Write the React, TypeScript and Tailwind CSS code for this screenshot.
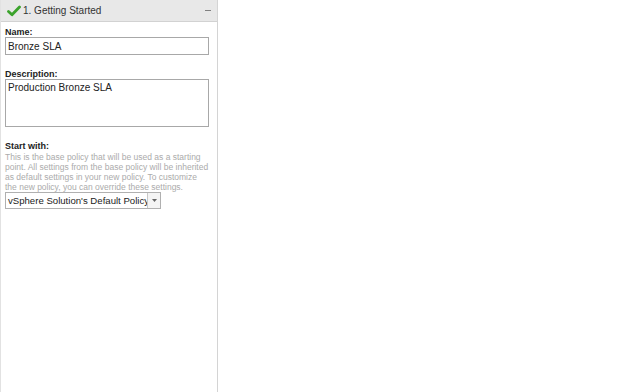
import React from 'react'

const App = () => {
  return (
    <div className="w-[640px] h-[392px] bg-white flex" style={{ fontFamily: '"Liberation Sans", Arial, sans-serif' }}>
      <div className="w-[218px] h-full border-l border-r border-l-[#e2e2e2] border-r-[#d4d4d4] flex flex-col">
        <div className="h-[22px] bg-[#e8e8e8] border-b border-[#d2d2d2] flex items-center pl-[6px] pr-[6px]">
          <svg width="14" height="12" viewBox="0 0 14 12" className="mr-[2px]">
            <path d="M1.5 6.5 L5 9.8 L12.5 2" fill="none" stroke="#3ba32c" strokeWidth="2.8" strokeLinecap="round" strokeLinejoin="round" />
          </svg>
          <span className="text-[10px] text-[#333]">1. Getting Started</span>
          <span className="ml-auto w-[6px] h-[1px] bg-[#808080]" />
        </div>
        <div className="pl-[4px] pt-[5px] flex flex-col">
          <label className="text-[9px] font-bold text-[#222] leading-[10px]">Name:</label>
          <input
            defaultValue="Bronze SLA"
            className="w-[204px] h-[18px] border border-[#a8a8a8] px-[2px] text-[10px] text-[#222] outline-none"
          />
          <label className="mt-[14px] text-[9px] font-bold text-[#222] leading-[10px]">Description:</label>
          <textarea
            defaultValue="Production Bronze SLA"
            className="w-[204px] h-[48px] border border-[#a8a8a8] px-[2px] pt-[2px] text-[10px] leading-[12px] text-[#222] outline-none resize-none"
          />
          <label className="mt-[14px] text-[9px] font-bold text-[#222] leading-[10px]">Start with:</label>
          <p className="mt-[1px] text-[8.5px] leading-[10px] text-[#ababab] w-[206px]">
            This is the base policy that will be used as a starting point. All settings from the base policy will be inherited as default settings in your new policy. To customize the new policy, you can override these settings.
          </p>
          <div className="flex w-[156px] h-[17px] border border-[#b0b0b0]">
            <div className="flex-1 overflow-hidden whitespace-nowrap text-[9.6px] leading-[15px] pl-[2px] text-[#222]">
              vSphere Solution's Default Policy
            </div>
            <div className="w-[13px] border-l border-[#c8c8c8] bg-[#f4f4f4] flex items-center justify-center">
              <svg width="5" height="3" viewBox="0 0 5 3">
                <path d="M0 0 L5 0 L2.5 3 Z" fill="#666" />
              </svg>
            </div>
          </div>
        </div>
      </div>
      <div className="flex-1" />
    </div>
  )
}

export default App
